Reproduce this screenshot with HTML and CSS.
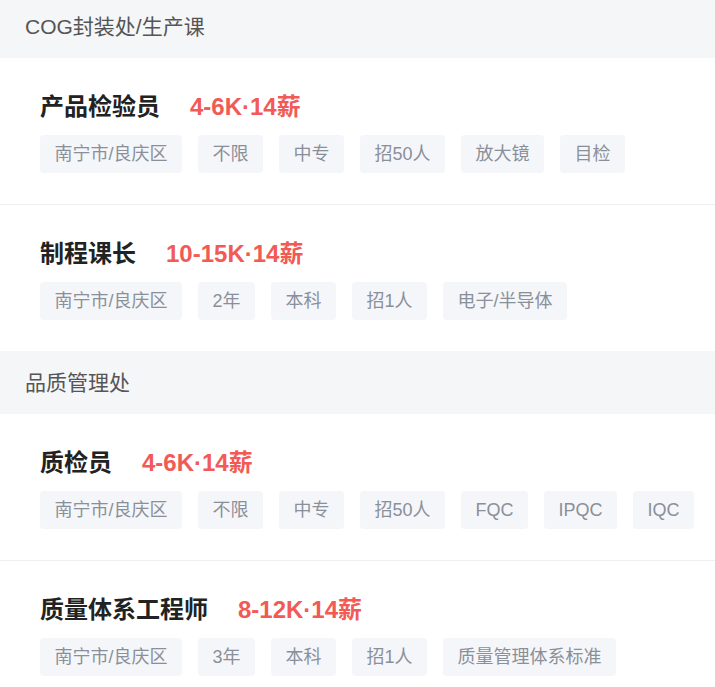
FILE: index.html
```html
<!DOCTYPE html>
<html lang="zh-CN">
<head>
    <meta charset="UTF-8">
    <meta name="viewport" content="width=device-width, initial-scale=1.0">
    <title>职位列表</title>
    <link rel="stylesheet" href="styles.css">
</head>
<body>
    <div class="job-list">
        <div class="dept">
            <div class="dept-title">COG封装处/生产课</div>
            <div class="job">
                <div class="job-head">
                    <span class="job-name">产品检验员</span>
                    <span class="job-salary">4-6K·14薪</span>
                </div>
                <div class="tags">
                    <span class="tag">南宁市/良庆区</span>
                    <span class="tag">不限</span>
                    <span class="tag">中专</span>
                    <span class="tag">招50人</span>
                    <span class="tag">放大镜</span>
                    <span class="tag">目检</span>
                </div>
            </div>
            <div class="job">
                <div class="job-head">
                    <span class="job-name">制程课长</span>
                    <span class="job-salary">10-15K·14薪</span>
                </div>
                <div class="tags">
                    <span class="tag">南宁市/良庆区</span>
                    <span class="tag">2年</span>
                    <span class="tag">本科</span>
                    <span class="tag">招1人</span>
                    <span class="tag">电子/半导体</span>
                </div>
            </div>
        </div>
        <div class="dept">
            <div class="dept-title">品质管理处</div>
            <div class="job">
                <div class="job-head">
                    <span class="job-name">质检员</span>
                    <span class="job-salary">4-6K·14薪</span>
                </div>
                <div class="tags">
                    <span class="tag">南宁市/良庆区</span>
                    <span class="tag">不限</span>
                    <span class="tag">中专</span>
                    <span class="tag">招50人</span>
                    <span class="tag">FQC</span>
                    <span class="tag">IPQC</span>
                    <span class="tag">IQC</span>
                </div>
            </div>
            <div class="job">
                <div class="job-head">
                    <span class="job-name">质量体系工程师</span>
                    <span class="job-salary">8-12K·14薪</span>
                </div>
                <div class="tags">
                    <span class="tag">南宁市/良庆区</span>
                    <span class="tag">3年</span>
                    <span class="tag">本科</span>
                    <span class="tag">招1人</span>
                    <span class="tag">质量管理体系标准</span>
                </div>
            </div>
        </div>
    </div>
</body>
</html>
```

FILE: styles.css
```css
body {
    margin: 0;
    background-color: #fff;
    font-family: 'Liberation Sans', 'Noto Sans CJK SC', sans-serif;
    overflow: hidden;
}
.job-list {
    margin-top: -5px; /* list is scrolled a little */
}
.dept-title {
    height: 63px;
    line-height: 63px;
    padding: 0 25px;
    font-size: 21px;
    color: #555;
    background-color: #f5f6f8;
}
.job {
    padding: 32px 16px 31px 40px;
    border-bottom: 1px solid #eeeff2;
}
.job:last-child {
    border-bottom: none;
}
.job-head {
    display: flex;
    align-items: center;
    gap: 30px;
    height: 34px;
    line-height: 34px;
    font-size: 24px;
    font-weight: bold;
}
.job-name {
    color: #222;
}
.job-salary {
    color: #f25a55;
}
.tags {
    display: flex;
    flex-wrap: wrap;
    gap: 16px;
    margin-top: 11px;
}
.tag {
    height: 38px;
    line-height: 38px;
    padding: 0 14.5px;
    font-size: 18px;
    color: #8a909a;
    background-color: #f5f6f9;
    border-radius: 4px;
}
```
